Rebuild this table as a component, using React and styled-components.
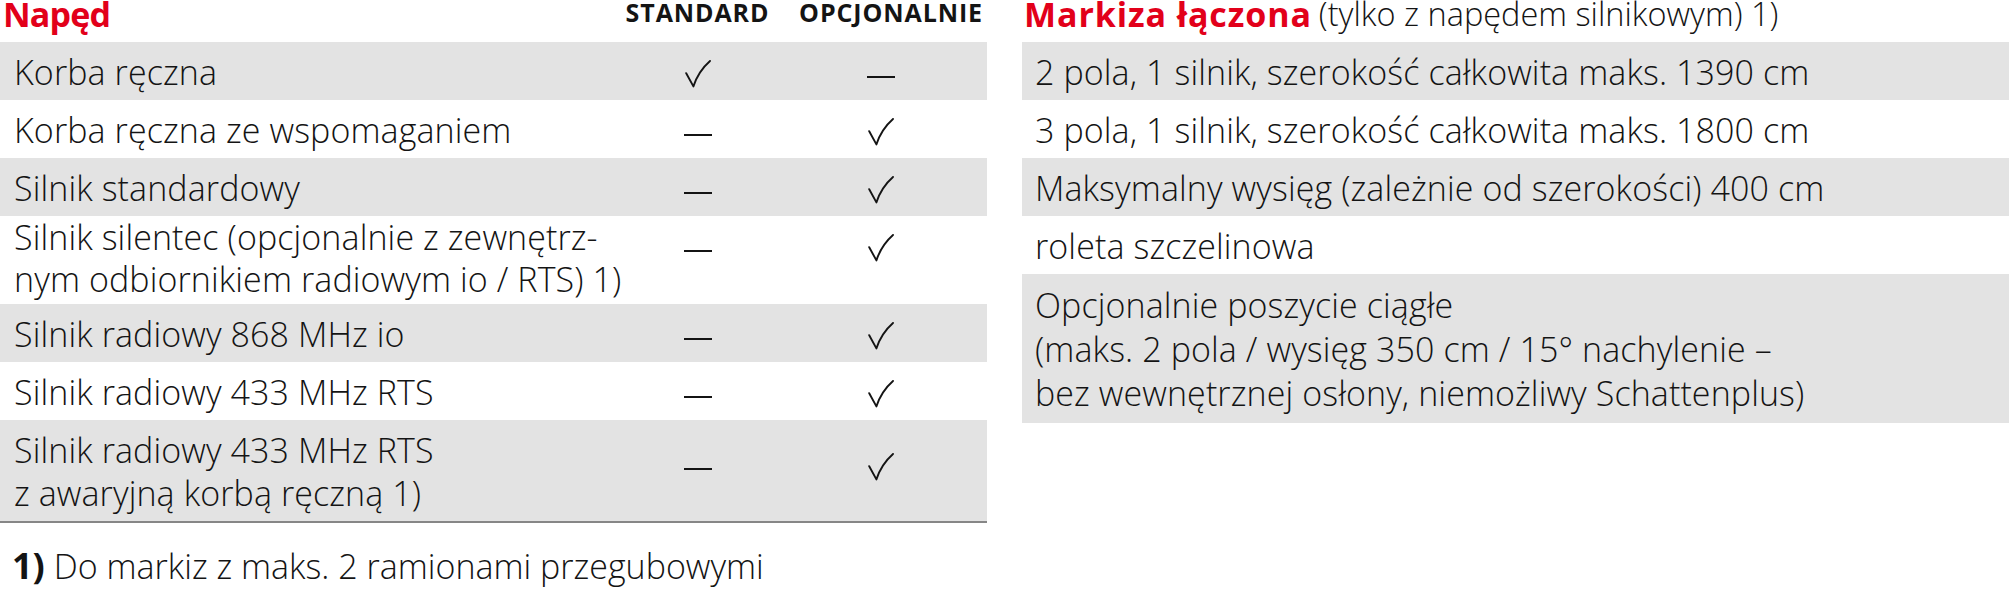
import React from "react";
import styled, { createGlobalStyle } from "styled-components";

const RED = "#e2001a";
const GREY = "#e3e3e3";
const INK = "#141414";

const Global = createGlobalStyle`
  html, body {
    margin: 0;
    padding: 0;
    background: #fff;
  }
  body {
    font-family: "Open Sans", "Noto Sans", sans-serif;
    color: ${INK};
  }
`;

const Page = styled.div`
  display: flex;
  gap: 35px;
  width: 2009px;
`;

const LeftColumn = styled.section`
  width: 987px;
  flex: none;
`;

const RightColumn = styled.section`
  flex: 1;
  min-width: 0;
`;

const Grid = styled.div`
  display: grid;
  grid-template-columns: minmax(0, 1fr) 155px 212px;
`;

const HeadRow = styled.div`
  height: 42px;
  display: flex;
  align-items: flex-start;
  white-space: nowrap;
`;

const Title = styled.h2`
  margin: 0;
  font-size: 34px;
  line-height: 28px;
  font-weight: 700;
  letter-spacing: ${(p) => p.$spacing}px;
  color: ${RED};
  padding-left: ${(p) => p.$indent || 0}px;
`;

const TitleNote = styled.span`
  font-size: 32.5px;
  line-height: 28px;
  font-weight: 300;
  color: ${INK};
  margin-left: 7px;
`;

const ColHead = styled.div`
  height: 42px;
  font-size: 25px;
  line-height: 25px;
  font-weight: 700;
  letter-spacing: 0.9px;
  text-transform: uppercase;
  white-space: nowrap;
  text-align: ${(p) => p.$align};
  padding-right: ${(p) => (p.$align === "right" ? 4 : 0)}px;
`;

const Row = styled.div`
  grid-column: 1 / -1;
  display: grid;
  grid-template-columns: subgrid;
  background: ${(p) => (p.$shade ? GREY : "transparent")};
  border-bottom: ${(p) => (p.$last ? "2.5px solid #868686" : "none")};
`;

const Cell = styled.div`
  padding: ${(p) => (p.$tight ? "0 14px 4px" : "9px 14px 6px")};
  font-size: 34px;
  line-height: ${(p) => (p.$tight ? 42 : 43)}px;
  font-weight: 300;
  letter-spacing: 0.1px;
  white-space: nowrap;
`;

const MarkCell = styled.div`
  display: flex;
  align-items: center;
  justify-content: center;
  transform: translateY(${(p) => p.$shift}px);
`;

const Dash = styled.span`
  display: block;
  width: 28px;
  height: 2px;
  background: ${INK};
  margin-top: 5px;
`;

const CheckSvg = styled.svg`
  display: block;
  width: 26px;
  height: 28px;
`;

const Check = () => (
  <CheckSvg viewBox="0 0 26 28" fill="none">
    <path
      d="M1.2 13.2 L8.4 26.4 C11.5 17 16.5 8.5 25 1"
      stroke={INK}
      strokeWidth="1.9"
      strokeLinecap="round"
      strokeLinejoin="round"
    />
  </CheckSvg>
);

const Mark = ({ on, shift }) => (
  <MarkCell $shift={shift}>{on ? <Check /> : <Dash />}</MarkCell>
);

const Footnote = styled.p`
  margin: 21px 0 0;
  padding-left: 12px;
  font-size: 34px;
  line-height: 43px;
  font-weight: 300;
  white-space: nowrap;
`;

const FootNum = styled.b`
  font-weight: 700;
  font-size: 36px;
  margin-right: 9px;
`;

const SideRow = styled.div`
  background: ${(p) => (p.$shade ? GREY : "transparent")};
  padding: 9px 13px ${(p) => (p.$lines > 1 ? 8 : 6)}px;
  font-size: 34px;
  line-height: ${(p) => (p.$lines > 1 ? 44 : 43)}px;
  font-weight: 300;
  letter-spacing: 0.1px;
  white-space: nowrap;
`;

const drives = [
  { label: ["Korba ręczna"], std: true, opt: false, shift: 3 },
  { label: ["Korba ręczna ze wspomaganiem"], std: false, opt: true, shift: 3 },
  { label: ["Silnik standardowy"], std: false, opt: true, shift: 3 },
  {
    label: [
      "Silnik silentec (opcjonalnie z zewnętrz-",
      "nym odbiornikiem radiowym io / RTS) 1)",
    ],
    std: false,
    opt: true,
    shift: -12,
    tight: true,
  },
  { label: ["Silnik radiowy 868 MHz io"], std: false, opt: true, shift: 3 },
  { label: ["Silnik radiowy 433 MHz RTS"], std: false, opt: true, shift: 3 },
  {
    label: ["Silnik radiowy 433 MHz RTS", "z awaryjną korbą ręczną 1)"],
    std: false,
    opt: true,
    shift: -4,
  },
];

const combined = [
  ["2 pola, 1 silnik, szerokość całkowita maks. 1390 cm"],
  ["3 pola, 1 silnik, szerokość całkowita maks. 1800 cm"],
  ["Maksymalny wysięg (zależnie od szerokości) 400 cm"],
  ["roleta szczelinowa"],
  [
    "Opcjonalnie poszycie ciągłe",
    "(maks. 2 pola / wysięg 350 cm / 15° nachylenie –",
    "bez wewnętrznej osłony, niemożliwy Schattenplus)",
  ],
];

const Lines = ({ lines }) =>
  lines.map((l, i) => (
    <React.Fragment key={i}>
      {i > 0 && <br />}
      {l}
    </React.Fragment>
  ));

export default function App() {
  return (
    <>
      <Global />
      <Page>
        <LeftColumn>
          <Grid>
            <HeadRow>
              <Title $indent={3} $spacing={-0.8}>Napęd</Title>
            </HeadRow>
            <ColHead $align="center">Standard</ColHead>
            <ColHead $align="right">Opcjonalnie</ColHead>
            {drives.map((d, i) => (
              <Row key={i} $shade={i % 2 === 0} $last={i === drives.length - 1}>
                <Cell $tight={d.tight}>
                  <Lines lines={d.label} />
                </Cell>
                <Mark on={d.std} shift={d.shift} />
                <Mark on={d.opt} shift={d.shift} />
              </Row>
            ))}
          </Grid>
          <Footnote>
            <FootNum>1)</FootNum>Do markiz z maks. 2 ramionami przegubowymi
          </Footnote>
        </LeftColumn>
        <RightColumn>
          <HeadRow>
            <Title $indent={2} $spacing={0.9}>Markiza łączona</Title>
            <TitleNote>(tylko z napędem silnikowym) 1)</TitleNote>
          </HeadRow>
          {combined.map((lines, i) => (
            <SideRow key={i} $shade={i % 2 === 0} $lines={lines.length}>
              <Lines lines={lines} />
            </SideRow>
          ))}
        </RightColumn>
      </Page>
    </>
  );
}
